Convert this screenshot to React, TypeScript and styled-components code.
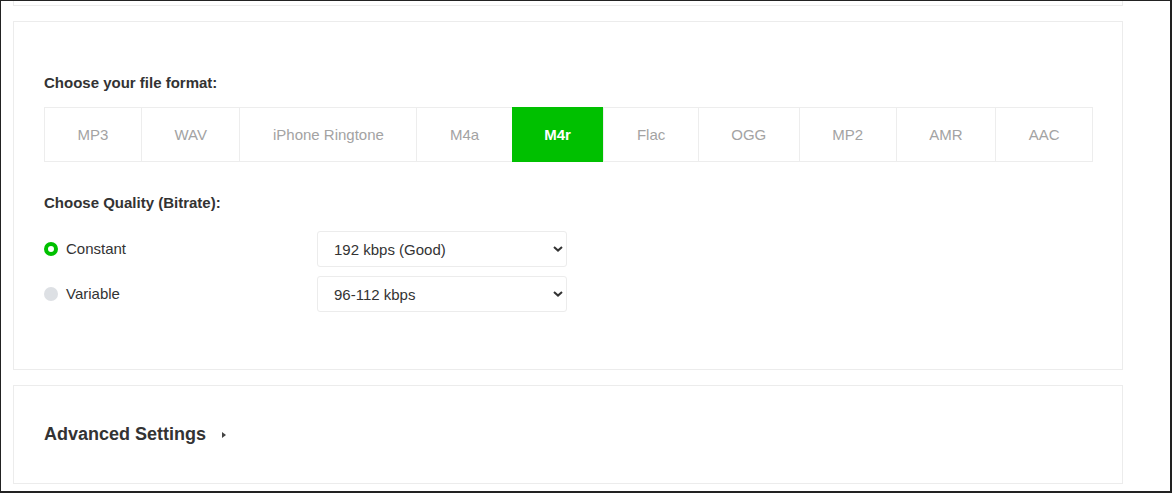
import * as React from 'react';
import styled, {createGlobalStyle} from "styled-components";

const GlobalStyle = createGlobalStyle`
    html, body {
        margin: 0;
        padding: 0;
        background: #ffffff;
    }
    * {
        box-sizing: border-box;
    }
`

const formats = ["MP3", "WAV", "iPhone Ringtone", "M4a", "M4r", "Flac", "OGG", "MP2", "AMR", "AAC"];

const Chevron = () => (
    <svg width="10" height="6" viewBox="0 0 10 6">
        <path d="M1 1 L5 4.6 L9 1" fill="none" stroke="#333" strokeWidth="2"/>
    </svg>
);

export default function App() {
    const [active, setActive] = React.useState("M4r");
    const [mode, setMode] = React.useState("constant");

    return (
        <Frame>
            <GlobalStyle/>
            <TopStub/>
            <Card>
                <Heading>Choose your file format:</Heading>
                <FormatBar>
                    {formats.map(f => (
                        <FormatCell key={f} $active={f === active} onClick={() => setActive(f)}>
                            {f}
                        </FormatCell>
                    ))}
                </FormatBar>
                <Heading $top={31}>Choose Quality (Bitrate):</Heading>
                <QualityGrid>
                    <RadioLabel onClick={() => setMode("constant")}>
                        <RadioDot $checked={mode === "constant"}/>
                        Constant
                    </RadioLabel>
                    <SelectBox>
                        <Select defaultValue="192">
                            <option value="128">128 kbps</option>
                            <option value="192">192 kbps (Good)</option>
                            <option value="256">256 kbps</option>
                            <option value="320">320 kbps (Best)</option>
                        </Select>
                        <ArrowSlot><Chevron/></ArrowSlot>
                    </SelectBox>
                    <RadioLabel onClick={() => setMode("variable")}>
                        <RadioDot $checked={mode === "variable"}/>
                        Variable
                    </RadioLabel>
                    <SelectBox>
                        <Select defaultValue="96">
                            <option value="96">96-112 kbps</option>
                            <option value="128">128-160 kbps</option>
                            <option value="192">192-224 kbps</option>
                        </Select>
                        <ArrowSlot><Chevron/></ArrowSlot>
                    </SelectBox>
                </QualityGrid>
            </Card>
            <AdvancedCard>
                <AdvancedTitle>
                    Advanced Settings
                    <Caret/>
                </AdvancedTitle>
            </AdvancedCard>
        </Frame>
    );
}

const Frame = styled.div`
    height: 493px;
    overflow: hidden;
    border-top: 1px solid #222;
    border-left: 1px solid #222;
    border-right: 2px solid #222;
    border-bottom: 2px solid #222;
    padding-left: 12px;
    font-family: "Liberation Sans", Arial, sans-serif;
    color: #333;
`
const TopStub = styled.div`
    width: 1110px;
    height: 5px;
    border: 1px solid #ececec;
    border-top: none;
`
const Card = styled.section`
    width: 1110px;
    margin-top: 15px;
    height: 349px;
    border: 1px solid #ececec;
    padding: 51px 29px 0 30px;
`
const Heading = styled.h3<{ $top?: number }>`
    margin: ${p => p.$top ?? 0}px 0 0;
    font-size: 15px;
    line-height: 20px;
    font-weight: bold;
    color: #333;
`
const FormatBar = styled.div`
    display: flex;
    margin-top: 14px;
    height: 55px;
    border: 1px solid #ededed;
`
const FormatCell = styled.div<{ $active: boolean }>`
    flex: 1 1 auto;
    display: flex;
    align-items: center;
    justify-content: center;
    padding-bottom: 1px;
    white-space: nowrap;
    font-size: 15px;
    cursor: pointer;
    border-right: 1px solid #ededed;
    margin: ${p => p.$active ? "-1px 0 -1px -1px" : "0"};
    background: ${p => p.$active ? "#00c000" : "#fff"};
    color: ${p => p.$active ? "#fff" : "#a3a3a3"};
    font-weight: ${p => p.$active ? "bold" : "normal"};
    &:last-child {
        border-right: none;
    }
`
const QualityGrid = styled.div`
    display: grid;
    grid-template-columns: 273px 250px;
    row-gap: 9px;
    margin-top: 18px;
    align-items: center;
`
const RadioLabel = styled.label`
    display: flex;
    align-items: center;
    gap: 8px;
    font-size: 15px;
    color: #333;
    cursor: pointer;
    margin-top: -1px;
`
const RadioDot = styled.span<{ $checked: boolean }>`
    width: 14px;
    height: 14px;
    border-radius: 50%;
    background: ${p => p.$checked ? "#fff" : "#dde0e4"};
    border: ${p => p.$checked ? "4px solid #00c000" : "none"};
`
const SelectBox = styled.div`
    position: relative;
    height: 36px;
`
const Select = styled.select`
    appearance: none;
    width: 100%;
    height: 36px;
    border: 1px solid #ececec;
    border-radius: 3px;
    background: #fff;
    padding: 0 30px 0 16px;
    font-family: "Liberation Sans", Arial, sans-serif;
    font-size: 15px;
    color: #333;
    outline: none;
`
const ArrowSlot = styled.span`
    position: absolute;
    right: 4px;
    top: 15px;
    width: 10px;
    height: 6px;
    pointer-events: none;
    display: flex;
`
const AdvancedCard = styled.section`
    width: 1110px;
    margin-top: 15px;
    height: 99px;
    border: 1px solid #ececec;
    padding: 36px 30px 0;
`
const AdvancedTitle = styled.h2`
    margin: 0;
    display: flex;
    align-items: center;
    gap: 16px;
    font-size: 18px;
    line-height: 24px;
    font-weight: bold;
    color: #333;
`
const Caret = styled.span`
    width: 0;
    height: 0;
    border-top: 3.5px solid transparent;
    border-bottom: 3.5px solid transparent;
    border-left: 4px solid #444;
    margin-top: 2px;
`
